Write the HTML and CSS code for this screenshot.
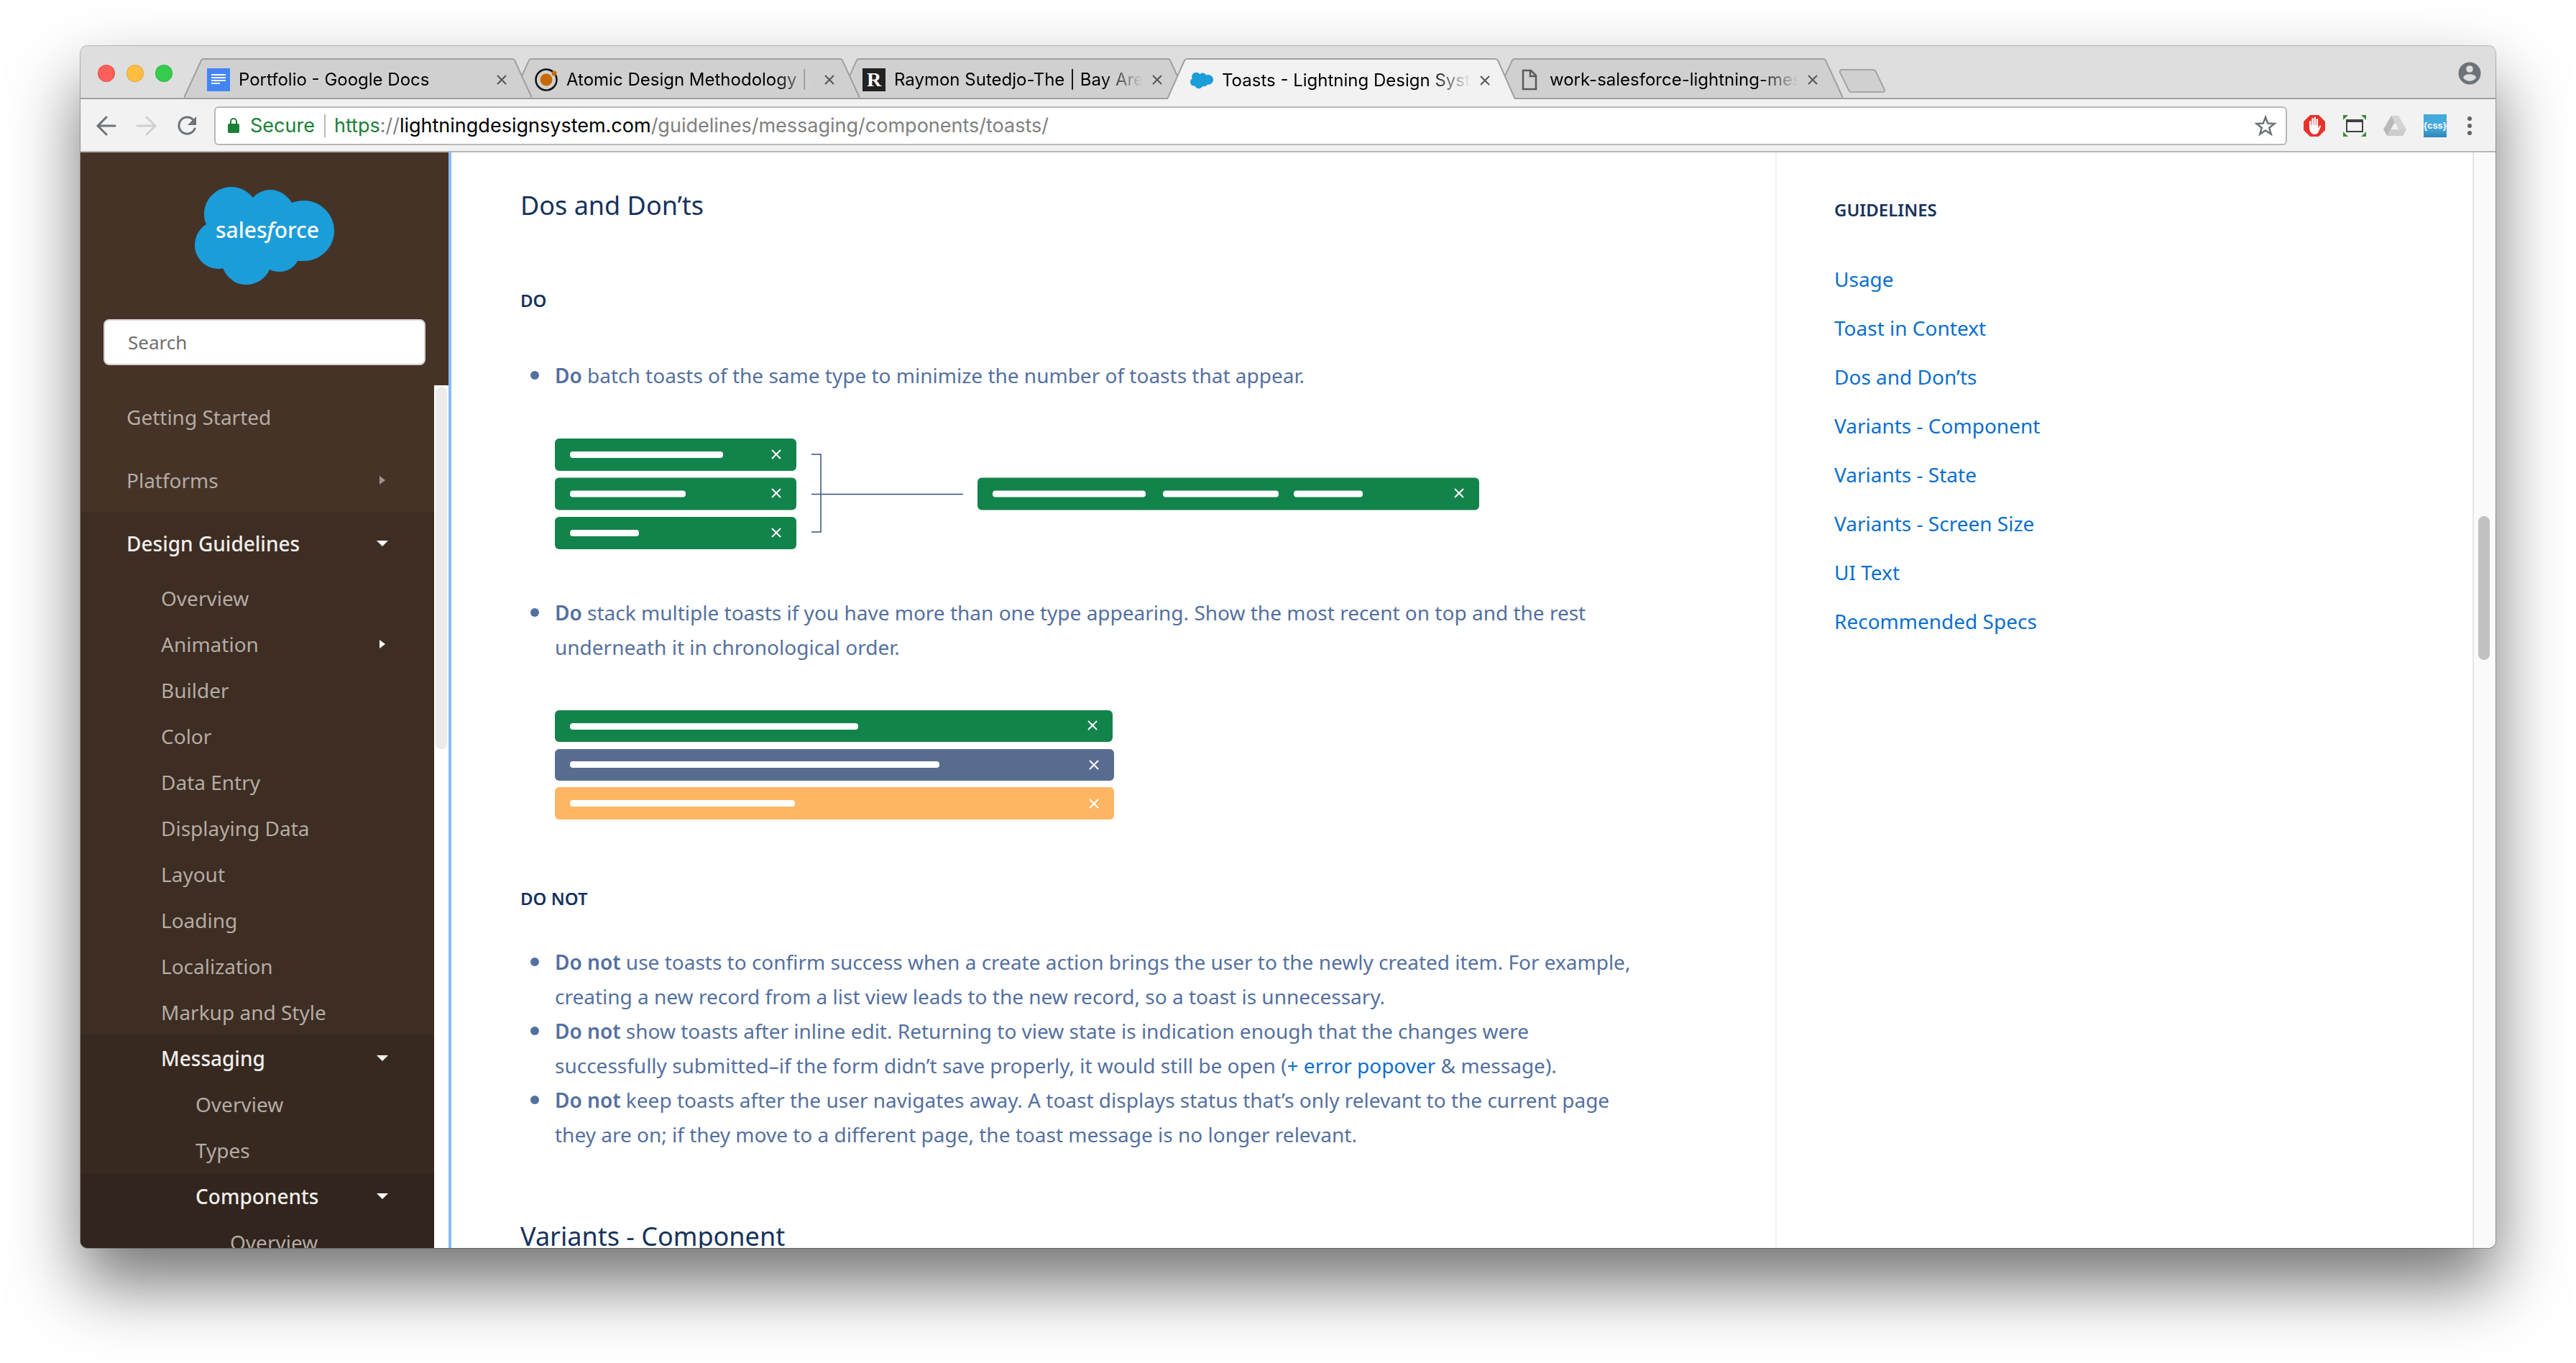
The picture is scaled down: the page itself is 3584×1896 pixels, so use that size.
FILE: index.html
```html
<!DOCTYPE html>
<html lang="en">
<head>
<meta charset="utf-8">
<title>Toasts - Lightning Design System</title>
<link rel="stylesheet" href="styles.css">
</head>
<body>
<div class="window">
  <header class="tabstrip">
    <div class="lights" aria-hidden="true"><span class="light red"></span><span class="light yellow"></span><span class="light green"></span></div>
    <div class="tabs">
      <div class="tab">
        <svg class="tab-shape" viewBox="0 0 484 57" preserveAspectRatio="none"><path d="M0 57 L24 3 Q25 1 28 1 H456 Q459 1 460 3 L484 57"/></svg>
        <svg class="favicon" viewBox="0 0 32 32"><path fill="#4285f4" d="M0 0h32v32H0z"/><path fill="#fff" d="M6 8h20v2H6zM6 12h20v2H6zM6 16h20v2H6zM6 20h12v2H6z"/></svg>
        <span class="tab-title">Portfolio - Google Docs</span>
        <button class="tab-close" aria-label="Close tab"><svg viewBox="0 0 16 16"><path d="M2 2l12 12M14 2L2 14"/></svg></button>
      </div>
      <div class="tab">
        <svg class="tab-shape" viewBox="0 0 484 57" preserveAspectRatio="none"><path d="M0 57 L24 3 Q25 1 28 1 H456 Q459 1 460 3 L484 57"/></svg>
        <svg class="favicon" viewBox="0 0 32 32"><circle cx="16" cy="16" r="14.500" fill="none" stroke="#111" stroke-width="2.500"/><circle cx="16" cy="16" r="8.500" fill="#c76a00"/><circle cx="27" cy="7" r="3.500" fill="#c76a00"/></svg>
        <span class="tab-title">Atomic Design Methodology | Atomic</span>
        <button class="tab-close" aria-label="Close tab"><svg viewBox="0 0 16 16"><path d="M2 2l12 12M14 2L2 14"/></svg></button>
      </div>
      <div class="tab">
        <svg class="tab-shape" viewBox="0 0 484 57" preserveAspectRatio="none"><path d="M0 57 L24 3 Q25 1 28 1 H456 Q459 1 460 3 L484 57"/></svg>
        <span class="favicon favicon-r">R</span>
        <span class="tab-title">Raymon Sutedjo-The | Bay Area</span>
        <button class="tab-close" aria-label="Close tab"><svg viewBox="0 0 16 16"><path d="M2 2l12 12M14 2L2 14"/></svg></button>
      </div>
      <div class="tab active">
        <svg class="tab-shape" viewBox="0 0 484 57" preserveAspectRatio="none"><path d="M0 57 L24 3 Q25 1 28 1 H456 Q459 1 460 3 L484 57"/></svg>
        <svg class="favicon" viewBox="0 0 194 136"><use href="#cloud"/></svg>
        <span class="tab-title">Toasts - Lightning Design System</span>
        <button class="tab-close" aria-label="Close tab"><svg viewBox="0 0 16 16"><path d="M2 2l12 12M14 2L2 14"/></svg></button>
      </div>
      <div class="tab">
        <svg class="tab-shape" viewBox="0 0 484 57" preserveAspectRatio="none"><path d="M0 57 L24 3 Q25 1 28 1 H456 Q459 1 460 3 L484 57"/></svg>
        <svg class="favicon" viewBox="0 0 32 32"><path fill="none" stroke="#5a5a5a" stroke-width="2.500" d="M7 3h11l7 7v19H7zM17 3v8h8"/></svg>
        <span class="tab-title">work-salesforce-lightning-messaging</span>
        <button class="tab-close" aria-label="Close tab"><svg viewBox="0 0 16 16"><path d="M2 2l12 12M14 2L2 14"/></svg></button>
      </div>
      <button class="new-tab" aria-label="New tab"><svg viewBox="0 0 66 34"><path d="M5 1H48Q51 1 52 4L64 29Q65 32 61 32H18Q15 32 14 29L2 5Q1 1 5 1z"/></svg></button>
    </div>
    <button class="icon-btn profile" aria-label="Profile"><svg viewBox="0 0 32 32"><circle cx="16" cy="16" r="15.500" fill="#6e7378"/><circle cx="16" cy="10" r="4.800" fill="#dedede"/><path fill="#dedede" d="M7 22c0-3 5-4.800 9-4.800s9 1.800 9 4.800c-2 3-5 4.700-9 4.700S9 25 7 22z"/></svg></button>
  </header>

  <div class="toolbar">
    <div class="nav-buttons">
      <button class="icon-btn" aria-label="Back"><svg viewBox="0 0 32 32"><path class="line" d="M28 16H5M16 4L4 16l12 12"/></svg></button>
      <button class="icon-btn faint" aria-label="Forward"><svg viewBox="0 0 32 32"><path class="line" d="M3 16h24M16 4l12 12-12 12"/></svg></button>
      <button class="icon-btn" aria-label="Reload"><svg viewBox="0 0 32 32"><path class="line" d="M25 8A11.500 11.500 0 1 0 27 20"/><path fill="#6e7378" d="M29 3v12H17z"/></svg></button>
    </div>
    <div class="address">
      <svg class="lock" viewBox="0 0 18 24"><rect x="1" y="9" width="16" height="13" rx="2" fill="#1a7f37"/><path fill="none" stroke="#1a7f37" stroke-width="2" d="M5 10V6a4 4 0 0 1 8 0v4"/></svg>
      <span class="secure">Secure</span>
      <span class="url"><span class="scheme">https</span>://<span class="host">lightningdesignsystem.com</span>/guidelines/messaging/components/toasts/</span>
      <button class="icon-btn star" aria-label="Bookmark"><svg viewBox="0 0 32 32"><path fill="none" stroke="#6e7378" stroke-width="2.500" d="M16 4l3.200 8.600 9.200.4-7.200 5.700 2.500 8.900-7.700-5.100-7.700 5.100 2.500-8.900L3.600 13l9.200-.4z"/></svg></button>
    </div>
    <div class="extensions">
      <button class="icon-btn" aria-label="Ad blocker"><svg viewBox="0 0 32 32"><path fill="#e8332c" d="M10 1h12l9 9v12l-9 9H10l-9-9V10z"/><path fill="#fff" d="M9 17v-7q1.200-2 2.400 0v5h.9V6q1.200-2 2.400 0v9h.8V4.500q1.200-2 2.400 0V15h.8V7q1.200-2 2.400 0v12l2-3q2-1 2 .6l-3.500 8Q20 28 16 28q-7-1-7-10z"/></svg></button>
      <button class="icon-btn" aria-label="Screen capture"><svg viewBox="0 0 32 32"><path fill="#3c8c35" d="M0 1h7l-7 7zM32 1h-7l7 7zM0 31h7l-7-7zM32 31h-7l7-7z"/><path fill="none" stroke="#3f4245" stroke-width="2" d="M5 8h22v16H5z"/><path fill="#3f4245" d="M4 7h24v4H4z"/></svg></button>
      <button class="icon-btn" aria-label="Drive"><svg viewBox="0 0 32 32"><path fill="#b9b9b9" d="M11 2L0 21l5 9 11-19z"/><path fill="#d4d4d4" d="M11 2h10l11 19H21z"/><path fill="#cccccc" d="M10.500 21H32l-5 9H5z"/></svg></button>
      <button class="icon-btn css" aria-label="CSS viewer">{css}</button>
      <button class="icon-btn menu" aria-label="Menu"><svg viewBox="0 0 32 32"><g fill="#5f6468"><circle cx="16" cy="6" r="3"/><circle cx="16" cy="16" r="3"/><circle cx="16" cy="26" r="3"/></g></svg></button>
    </div>
  </div>

  <div class="page">
    <aside class="sidebar">
      <a class="logo" href="#" aria-label="Salesforce">
        <svg viewBox="0 0 194 136"><defs><g id="cloud" fill="#1b9dd9"><path d="M81 15C73 5 62 0 51 0 30 0 13 17 13 38c0 5 1 10 3 14C6 58 0 69 0 81c0 18 15 33 33 33 2 0 4 0 6-1 6 14 18 23 32 23 15 0 27-8 33-21 4 2 9 3 14 3 11 0 20-6 25-15 3 0 6 0 9 0 23 0 42-19 42-42S175 19 152 19c-6 0-11 1-17 3-6-10-17-18-30-18-9 0-18 4-24 11z"/></g></defs><use href="#cloud"/></svg>
        <span class="wordmark">sales<i>f</i>orce</span>
      </a>
      <form class="search"><input type="search" placeholder="Search" aria-label="Search"></form>
      <div class="nav-scroll">
        <nav class="nav">
          <a class="row top" href="#">Getting Started</a>
          <a class="row top" href="#">Platforms<span class="caret right dim"></span></a>
          <div class="group g1">
            <a class="row top on" href="#">Design Guidelines<span class="caret down"></span></a>
            <a class="row l2" href="#">Overview</a>
            <a class="row l2" href="#">Animation<span class="caret right"></span></a>
            <a class="row l2" href="#">Builder</a>
            <a class="row l2" href="#">Color</a>
            <a class="row l2" href="#">Data Entry</a>
            <a class="row l2" href="#">Displaying Data</a>
            <a class="row l2" href="#">Layout</a>
            <a class="row l2" href="#">Loading</a>
            <a class="row l2" href="#">Localization</a>
            <a class="row l2" href="#">Markup and Style</a>
            <div class="group g2">
              <a class="row l2 on" href="#">Messaging<span class="caret down"></span></a>
              <a class="row l3" href="#">Overview</a>
              <a class="row l3" href="#">Types</a>
              <div class="group g3">
                <a class="row l3 on" href="#">Components<span class="caret down"></span></a>
                <a class="row l4" href="#">Overview</a>
              </div>
            </div>
          </div>
        </nav>
        <div class="nav-track"><div class="nav-thumb"></div></div>
      </div>
    </aside>

    <main class="content">
      <h2>Dos and Don’ts</h2>
      <h3>Do</h3>
      <ul class="do-list">
        <li>
          <p><strong>Do</strong> batch toasts of the same type to minimize the number of toasts that appear.</p>
          <svg class="figure batch" viewBox="0 0 1286 154" role="img" aria-label="Three toasts combined into one">
            <g fill="#13834c"><rect width="336" height="45" rx="6"/><rect y="54.500" width="336" height="45" rx="6"/><rect y="109" width="336" height="45" rx="6"/><rect x="588" y="54.500" width="698" height="45" rx="6"/></g>
            <g fill="#fff"><rect x="21" y="18" width="213" height="9" rx="4"/><rect x="21" y="72.500" width="161" height="9" rx="4"/><rect x="21" y="127" width="96" height="9" rx="4"/><rect x="609" y="72.500" width="213" height="9" rx="4"/><rect x="846" y="72.500" width="161" height="9" rx="4"/><rect x="1028" y="72.500" width="96" height="9" rx="4"/></g>
            <path fill="none" stroke="#fff" stroke-width="2" d="M302 16l12 12m0-12l-12 12M302 70l12 12m0-12l-12 12M302 125l12 12m0-12l-12 12M1252 70l12 12m0-12l-12 12"/>
            <path fill="none" stroke="#34507f" stroke-width="1.500" d="M357 22h13v108h-13M357 77.500h211"/>
          </svg>
        </li>
        <li>
          <p><strong>Do</strong> stack multiple toasts if you have more than one type appearing. Show the most recent on top and the rest underneath it in chronological order.</p>
          <svg class="figure stack" viewBox="0 0 778 152" role="img" aria-label="Stack of three toasts">
            <rect width="776" height="44" rx="6" fill="#13834c"/><rect y="54" width="778" height="44" rx="6" fill="#586c90"/><rect y="107" width="778" height="45" rx="6" fill="#feb665"/>
            <g fill="#fff"><rect x="21" y="18" width="401" height="9" rx="4"/><rect x="21" y="71" width="514" height="9" rx="4"/><rect x="21" y="125" width="313" height="9" rx="4"/></g>
            <path fill="none" stroke="#fff" stroke-width="2" d="M742 15l12 12m0-12l-12 12M744 70l12 12m0-12l-12 12M744 124l12 12m0-12l-12 12"/>
          </svg>
        </li>
      </ul>
      <h3>Do Not</h3>
      <ul class="dont-list">
        <li><p><strong>Do not</strong> use toasts to confirm success when a create action brings the user to the newly created item. For example, creating a new record from a list view leads to the new record, so a toast is unnecessary.</p></li>
        <li><p><strong>Do not</strong> show toasts after inline edit. Returning to view state is indication enough that the changes were successfully submitted–if the form didn’t save properly, it would still be open (<a href="#">+ error popover</a> &amp; message).</p></li>
        <li><p><strong>Do not</strong> keep toasts after the user navigates away. A toast displays status that’s only relevant to the current page they are on; if they move to a different page, the toast message is no longer relevant.</p></li>
      </ul>
      <h2>Variants - Component</h2>
    </main>

    <nav class="toc">
      <h3>Guidelines</h3>
      <a href="#">Usage</a>
      <a href="#">Toast in Context</a>
      <a href="#">Dos and Don’ts</a>
      <a href="#">Variants - Component</a>
      <a href="#">Variants - State</a>
      <a href="#">Variants - Screen Size</a>
      <a href="#">UI Text</a>
      <a href="#">Recommended Specs</a>
    </nav>
    <div class="page-track"><div class="page-thumb"></div></div>
  </div>
</div>
</body>
</html>
```
FILE: styles.css
```css
* { box-sizing: border-box; }

body {
  margin: 0;
  height: 100vh;
  padding: 64px 112px 160px;
  display: flex;
  background: #fff;
  overflow: hidden;
  font-family: "Noto Sans", "Open Sans", sans-serif;
}

button {
  margin: 0;
  padding: 0;
  border: 0;
  background: none;
  font: inherit;
  color: inherit;
}

a { text-decoration: none; }
svg { display: block; }

.window {
  flex: 1;
  min-width: 0;
  display: flex;
  flex-direction: column;
  border-radius: 10px;
  overflow: hidden;
  background: #fff;
  box-shadow: 0 0 0 1px rgba(0, 0, 0, .25), 0 50px 96px rgba(0, 0, 0, .55);
}

/* Tab strip */
.tabstrip {
  flex: none;
  height: 74px;
  display: flex;
  padding: 0 20px 0 24px;
  background: #dedede;
  box-shadow: inset 0 -2px #9f9f9f;
  font-family: Inter, sans-serif;
}

.lights {
  display: flex;
  gap: 16px;
  width: 120px;
  padding-top: 26px;
}

.light {
  width: 24px;
  height: 24px;
  border-radius: 50%;
  border: 1px solid rgba(0, 0, 0, .12);
}

.red { background: #ff5f5a; }
.yellow { background: #ffbe3f; }
.green { background: #35cc4b; }

.tabs {
  flex: 1;
  display: flex;
  align-items: flex-end;
}

.tab {
  position: relative;
  width: 484px;
  height: 57px;
  margin-right: -28px;
  padding: 4px 34px 0 32px;
  display: flex;
  align-items: center;
  gap: 12px;
}

.tab:nth-child(1) { z-index: 3; }
.tab:nth-child(2) { z-index: 2; }
.tab:nth-child(3) { z-index: 1; }
.tab.active { z-index: 4; }

.tab-shape {
  position: absolute;
  inset: 0;
  width: 100%;
  height: 100%;
  fill: #d0d0d0;
  stroke: #9f9f9f;
  stroke-width: 2;
}

.tab:not(.active) { border-bottom: 2px solid #9f9f9f; }
.active .tab-shape { fill: #f2f2f2; }

.favicon {
  position: relative;
  flex: none;
  width: 32px;
  height: 32px;
}

.favicon-r {
  background: #222;
  color: #fff;
  font: bold 28px/32px "Liberation Serif", serif;
  text-align: center;
}

.tab-title {
  position: relative;
  flex: 1;
  overflow: hidden;
  white-space: nowrap;
  font-size: 24px;
  line-height: 32px;
  color: #000;
  -webkit-mask-image: linear-gradient(to right, #000 calc(100% - 56px), transparent);
  mask-image: linear-gradient(to right, #000 calc(100% - 56px), transparent);
}

.tab-close { position: relative; }

.tab-close svg {
  width: 16px;
  height: 16px;
  stroke: #555;
  stroke-width: 2;
}

.new-tab {
  margin: 0 0 8px 22px;
}

.new-tab svg {
  width: 66px;
  height: 34px;
  fill: #d0d0d0;
  stroke: #a5a5a5;
  stroke-width: 2;
}

.icon-btn svg, .icon-btn {
  width: 32px;
  height: 32px;
}

.profile { margin-top: 22px; }

/* Toolbar */
.toolbar {
  flex: none;
  height: 74px;
  display: flex;
  align-items: center;
  gap: 22px;
  padding: 2px 20px 0;
  background: #f2f2f2;
  border-bottom: 2px solid #b6b6b6;
  font-family: Inter, sans-serif;
}

.nav-buttons { display: flex; gap: 24px; }
.line { fill: none; stroke: #6e7378; stroke-width: 3; stroke-linecap: round; }
.faint { opacity: .25; }

.address {
  flex: 1;
  min-width: 0;
  height: 54px;
  display: flex;
  align-items: center;
  padding: 0 12px 0 16px;
  background: #fff;
  border: 2px solid #b8b8b8;
  border-radius: 6px;
  font-size: 27px;
  line-height: 32px;
}

.lock { width: 18px; height: 24px; }

.secure {
  margin-left: 14px;
  padding-right: 13px;
  border-right: 2px solid #b8b8b8;
  color: #1a7f37;
}

.url { flex: 1; margin-left: 12px; color: #808080; white-space: nowrap; }
.scheme { color: #1a7f37; }
.host { color: #000; }

.extensions { display: flex; gap: 24px; }
.menu { margin-left: -8px; }

.css {
  background: linear-gradient(#45a9dc 60%, #3285b5);
  color: #fff;
  font: bold 13px/32px "Liberation Sans", sans-serif;
}

/* Page */
.page {
  flex: 1;
  min-height: 0;
  display: flex;
}

.sidebar {
  flex: none;
  width: 516px;
  display: flex;
  flex-direction: column;
  background: #463327;
  border-right: 4px solid #86bbf7;
}

.logo {
  position: relative;
  align-self: center;
  width: 194px;
  height: 136px;
  margin: 48px 0;
}

.wordmark {
  position: absolute;
  inset: 0;
  padding-left: 8px;
  color: #fff;
  font-size: 30px;
  font-weight: 500;
  line-height: 120px;
  text-align: center;
}

.search { padding: 0 32px; height: 92px; }

.search input {
  display: block;
  width: 100%;
  height: 64px;
  padding: 0 32px;
  border: 2px solid #d8d2ce;
  border-radius: 8px;
  background: #fff;
  font: 26px/32px "Noto Sans", sans-serif;
}

.search input::placeholder { color: #6e6e6e; }

.nav-scroll {
  flex: 1;
  min-height: 0;
  display: flex;
  overflow: hidden;
}

.nav { flex: 1; }

.row {
  display: flex;
  align-items: center;
  justify-content: space-between;
  height: 64px;
  padding-right: 64px;
  color: #b3aca6;
  font-size: 28px;
  line-height: 40px;
}

.top { height: 88px; padding-left: 64px; }
.l2 { padding-left: 112px; }
.l3 { padding-left: 160px; }
.l4 { padding-left: 208px; }
.on { color: #f0eeec; font-weight: 500; }

.g1 { background: #3e2d22; }
.g2 { background: #382920; }
.g3 { background: #32251d; }

.caret {
  width: 16px;
  height: 12px;
  background: #fff;
}

.right { clip-path: polygon(25% 0, 75% 50%, 25% 100%); }
.down { clip-path: polygon(0 17%, 100% 17%, 50% 83%); }
.dim { background: #a0968f; }

.nav-track {
  flex: none;
  width: 20px;
  padding: 2px;
  background: #fff;
}

.nav-thumb {
  height: 504px;
  border-radius: 8px;
  background: #ebebea;
}

.content {
  flex: 1;
  min-width: 0;
  padding: 50px 200px 0 96px;
  color: #54709f;
  font-size: 28px;
  line-height: 48px;
}

h2 {
  margin: 0;
  color: #16325c;
  font-size: 36px;
  font-weight: 400;
  line-height: 48px;
}

h3 {
  margin: 0;
  color: #16325c;
  font-size: 24px;
  font-weight: 600;
  line-height: 48px;
  text-transform: uppercase;
}

.content h2 + h3 { margin-top: 84px; }
strong { font-weight: 600; }
p { margin: 0; }

ul { margin: 0; padding-left: 48px; list-style: none; }

li::before {
  content: "";
  float: left;
  width: 12px;
  height: 12px;
  margin: 18px 22px 0 -34px;
  border-radius: 50%;
  background: #54709f;
}

.do-list { padding-top: 56px; }
.dont-list { padding-top: 40px; padding-bottom: 94px; }
.content a, .toc a { color: #0c6fcd; }

.figure { margin: 64px 0; }
.batch { width: 1286px; height: 154px; }
.stack { width: 778px; height: 152px; margin-bottom: 86px; }

.toc {
  flex: none;
  width: 970px;
  padding: 56px 80px;
  border-left: 2px solid #f0f1f3;
  font-size: 28px;
}

.toc h3 { margin-bottom: 38px; }
.toc a { display: block; line-height: 68px; }

.page-track {
  flex: none;
  width: 32px;
  padding: 506px 6px 0;
  background: #fafafa;
  border-left: 2px solid #e6e6e6;
}

.page-thumb {
  width: 16px;
  height: 200px;
  border-radius: 8px;
  background: #c1c1c1;
}
```
